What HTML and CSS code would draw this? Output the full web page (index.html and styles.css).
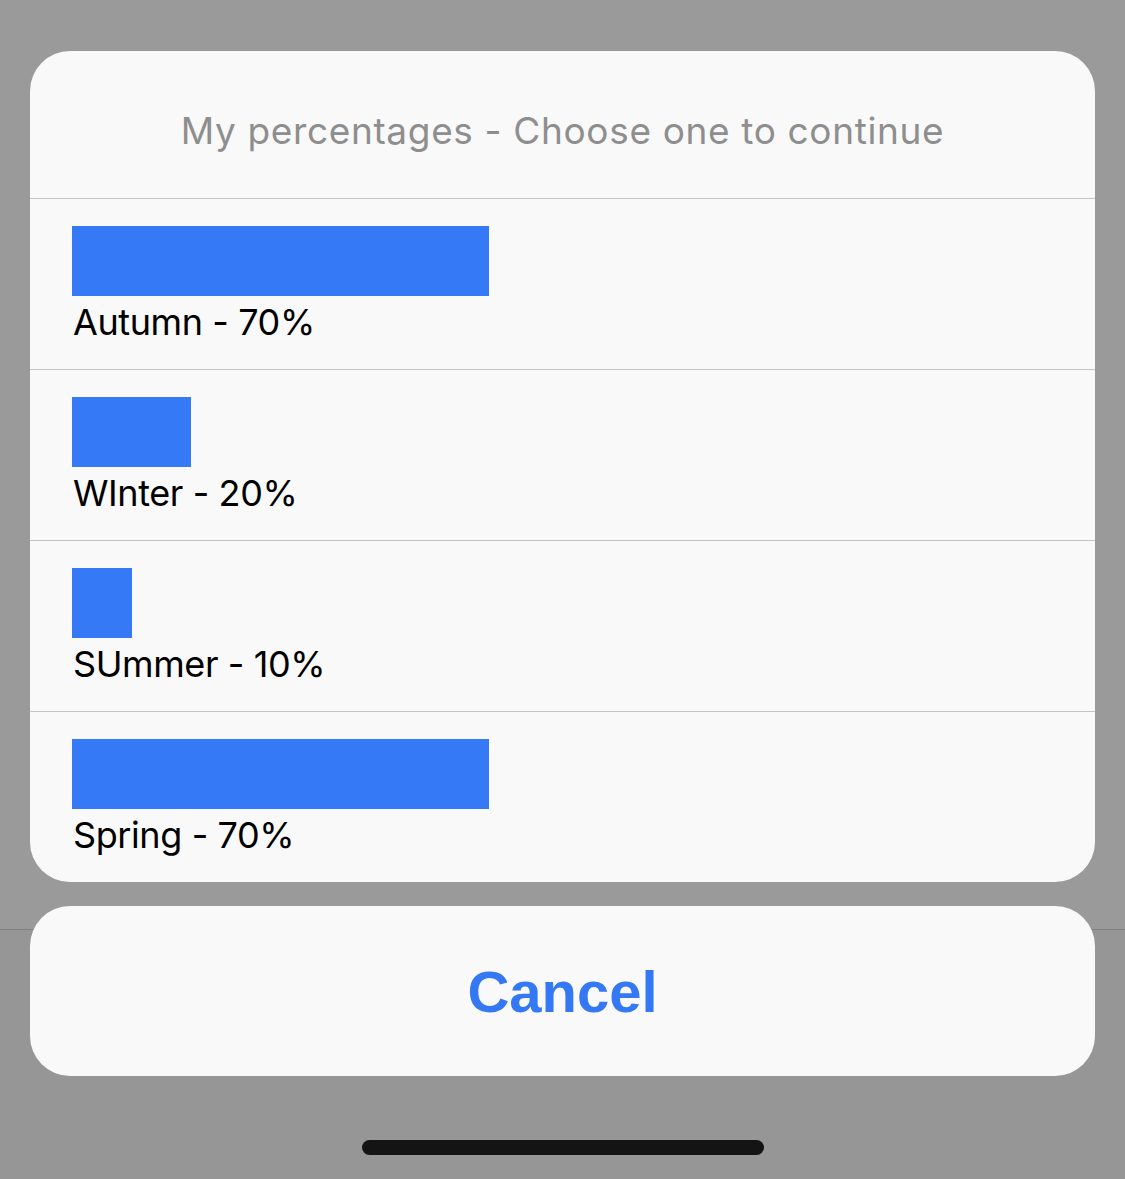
FILE: index.html
```html
<!DOCTYPE html>
<html>
<head>
<meta charset="utf-8">
<link rel="stylesheet" href="styles.css">
</head>
<body>
<div class="screen">
  <div class="sheet">
    <div class="title">My percentages - Choose one to continue</div>
    <div class="row">
      <div class="bar" style="width:417px"></div>
      <div class="label">Autumn - 70%</div>
    </div>
    <div class="row">
      <div class="bar" style="width:119px"></div>
      <div class="label">WInter - 20%</div>
    </div>
    <div class="row">
      <div class="bar" style="width:60px"></div>
      <div class="label">SUmmer - 10%</div>
    </div>
    <div class="row">
      <div class="bar" style="width:417px"></div>
      <div class="label">Spring - 70%</div>
    </div>
  </div>
  <div class="cancel">Cancel</div>
  <div class="home"></div>
</div>
</body>
</html>
```

FILE: styles.css
```css
html, body {
  margin: 0;
  padding: 0;
}
body {
  width: 1125px;
  height: 1179px;
  overflow: hidden;
  background: linear-gradient(to bottom, #9a9a9a 0, #9a9a9a 929px, #808080 929px, #808080 930px, #969696 930px);
}
.screen {
  padding: 51px 30px 0;
  display: flex;
  flex-direction: column;
}
.sheet {
  background: #f9f9f9;
  border-radius: 40px;
  overflow: hidden;
}
.title {
  height: 148px;
  box-sizing: border-box;
  padding-top: 12px;
  border-bottom: 1px solid #c4c4c4;
  display: flex;
  align-items: center;
  justify-content: center;
  font-family: Inter, Roboto, "Liberation Sans", sans-serif;
  font-size: 37px;
  color: #8e8e8e;
  letter-spacing: 0.65px;
}
.row {
  height: 171px;
  box-sizing: border-box;
  padding: 27px 42px 0;
  border-bottom: 1px solid #c4c4c4;
}
.row:last-child {
  height: 170px;
  border-bottom: none;
}
.bar {
  height: 70px;
  background: #3579f6;
}
.label {
  margin-top: 3px;
  font-family: Inter, Roboto, "Liberation Sans", sans-serif;
  font-size: 36px;
  line-height: 46px;
  color: #000;
  padding-left: 1px;
  letter-spacing: -0.4px;
}
.cancel {
  margin-top: 24px;
  height: 170px;
  background: #f9f9f9;
  border-radius: 40px;
  display: flex;
  align-items: center;
  justify-content: center;
  font-family: "Liberation Sans", Arial, sans-serif;
  font-weight: bold;
  font-size: 58px;
  color: #3478f6;
}
.home {
  width: 402px;
  height: 15px;
  border-radius: 8px;
  background: #141414;
  margin: 64px auto 0;
}
```
